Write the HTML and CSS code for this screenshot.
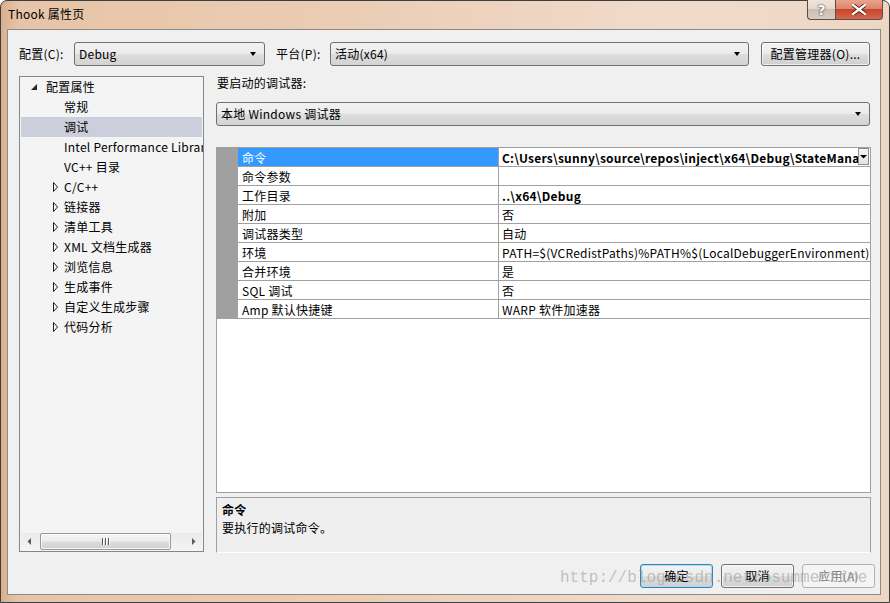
FILE: index.html
```html
<!DOCTYPE html>
<html lang="zh-CN">
<head>
<meta charset="utf-8">
<title>Thook 属性页</title>
<link rel="stylesheet" href="styles.css">
</head>
<body>
<div class="window">
  <div class="titlebar">
    <span class="title">Thook 属性页</span>
    <div class="caption">
      <div class="cap help">?</div>
      <div class="cap close">
        <svg width="14" height="11" viewBox="0 0 14 11"><path d="M1 1 L13 10 M13 1 L1 10" stroke="#4a1a10" stroke-width="4" stroke-linecap="round"/><path d="M1 1 L13 10 M13 1 L1 10" stroke="#ffffff" stroke-width="2.2" stroke-linecap="round"/></svg>
      </div>
    </div>
  </div>
  <div class="client">
    <div class="config-row">
      <span class="lbl lbl-cfg">配置(C):</span>
      <div class="combo combo-cfg"><span class="combo-text">Debug</span><span class="arrow"></span></div>
      <span class="lbl lbl-plat">平台(P):</span>
      <div class="combo combo-plat"><span class="combo-text">活动(x64)</span><span class="arrow"></span></div>
      <div class="btn btn-mgr">配置管理器(O)...</div>
    </div>
    <div class="main">
      <div class="tree">
        <ul class="tree-list">
          <li class="node lvl0"><span class="exp"><svg width="17" height="20" viewBox="0 0 17 20"><polygon points="8,7 8,13 2,13" fill="#262626"/></svg></span>配置属性</li>
          <li class="node lvl1"><span class="exp"></span>常规</li>
          <li class="node lvl1 selected"><span class="exp"></span>调试</li>
          <li class="node lvl1"><span class="exp"></span>Intel Performance Libraries</li>
          <li class="node lvl1"><span class="exp"></span>VC++ 目录</li>
          <li class="node lvl1"><span class="exp"><svg width="17" height="20" viewBox="0 0 17 20"><polygon points="6.5,5.5 10.5,10 6.5,14.5" fill="#fff" stroke="#1e1e1e" stroke-width="1"/></svg></span>C/C++</li>
          <li class="node lvl1"><span class="exp"><svg width="17" height="20" viewBox="0 0 17 20"><polygon points="6.5,5.5 10.5,10 6.5,14.5" fill="#fff" stroke="#1e1e1e" stroke-width="1"/></svg></span>链接器</li>
          <li class="node lvl1"><span class="exp"><svg width="17" height="20" viewBox="0 0 17 20"><polygon points="6.5,5.5 10.5,10 6.5,14.5" fill="#fff" stroke="#1e1e1e" stroke-width="1"/></svg></span>清单工具</li>
          <li class="node lvl1"><span class="exp"><svg width="17" height="20" viewBox="0 0 17 20"><polygon points="6.5,5.5 10.5,10 6.5,14.5" fill="#fff" stroke="#1e1e1e" stroke-width="1"/></svg></span>XML 文档生成器</li>
          <li class="node lvl1"><span class="exp"><svg width="17" height="20" viewBox="0 0 17 20"><polygon points="6.5,5.5 10.5,10 6.5,14.5" fill="#fff" stroke="#1e1e1e" stroke-width="1"/></svg></span>浏览信息</li>
          <li class="node lvl1"><span class="exp"><svg width="17" height="20" viewBox="0 0 17 20"><polygon points="6.5,5.5 10.5,10 6.5,14.5" fill="#fff" stroke="#1e1e1e" stroke-width="1"/></svg></span>生成事件</li>
          <li class="node lvl1"><span class="exp"><svg width="17" height="20" viewBox="0 0 17 20"><polygon points="6.5,5.5 10.5,10 6.5,14.5" fill="#fff" stroke="#1e1e1e" stroke-width="1"/></svg></span>自定义生成步骤</li>
          <li class="node lvl1"><span class="exp"><svg width="17" height="20" viewBox="0 0 17 20"><polygon points="6.5,5.5 10.5,10 6.5,14.5" fill="#fff" stroke="#1e1e1e" stroke-width="1"/></svg></span>代码分析</li>
        </ul>
        <div class="hscroll">
          <div class="sb-arrow"><svg width="17" height="17" viewBox="0 0 17 17"><polygon points="10,5 10,12 6.5,8.5" fill="#5a5a5a"/></svg></div>
          <div class="sb-track">
            <div class="sb-thumb"><span class="grip"></span><span class="grip"></span><span class="grip"></span></div>
          </div>
          <div class="sb-arrow"><svg width="17" height="17" viewBox="0 0 17 17"><polygon points="7,5 7,12 10.5,8.5" fill="#5a5a5a"/></svg></div>
        </div>
      </div>
      <div class="right">
        <div class="lbl-debugger">要启动的调试器:</div>
        <div class="combo combo-wide"><span class="combo-text">本地 Windows 调试器</span><span class="arrow"></span></div>
        <div class="grid">
          <div class="row sel">
            <div class="gutter"></div>
            <div class="name">命令</div>
            <div class="value bold"><span class="vtext">C:\Users\sunny\source\repos\inject\x64\Debug\StateManager.exe</span><span class="vdrop"><svg width="9" height="15" viewBox="0 0 9 15"><polygon points="1,6 8,6 4.5,9.5" fill="#000"/></svg></span></div>
          </div>
          <div class="row"><div class="gutter"></div><div class="name">命令参数</div><div class="value"></div></div>
          <div class="row"><div class="gutter"></div><div class="name">工作目录</div><div class="value bold">..\x64\Debug</div></div>
          <div class="row"><div class="gutter"></div><div class="name">附加</div><div class="value">否</div></div>
          <div class="row"><div class="gutter"></div><div class="name">调试器类型</div><div class="value">自动</div></div>
          <div class="row"><div class="gutter"></div><div class="name">环境</div><div class="value">PATH=$(VCRedistPaths)%PATH%$(LocalDebuggerEnvironment)</div></div>
          <div class="row"><div class="gutter"></div><div class="name">合并环境</div><div class="value">是</div></div>
          <div class="row"><div class="gutter"></div><div class="name">SQL 调试</div><div class="value">否</div></div>
          <div class="row"><div class="gutter"></div><div class="name">Amp 默认快捷键</div><div class="value">WARP 软件加速器</div></div>
        </div>
        <div class="desc">
          <div class="desc-title">命令</div>
          <div class="desc-text">要执行的调试命令。</div>
        </div>
      </div>
    </div>
    <div class="buttons">
      <div class="btn btn-ok">确定</div>
      <div class="btn btn-cancel">取消</div>
      <div class="btn btn-apply disabled">应用(A)</div>
    </div>
  </div>
</div>
<div class="watermark">http://blog.csdn.net/osummertime</div>
</body>
</html>
```
FILE: styles.css
```css
* { box-sizing: border-box; margin: 0; padding: 0; }
html, body { width: 890px; height: 603px; overflow: hidden; }
body {
  font-family: "Noto Sans CJK SC", "Noto Sans", sans-serif;
  font-size: 12px;
  letter-spacing: 0.25px;
  color: #000;
  background: #fff;
  position: relative;
}
.window {
  width: 890px;
  height: 603px;
  display: flex;
  flex-direction: column;
  border: 1px solid #3e3e3e;
  border-radius: 7px 7px 0 0;
  background: linear-gradient(to right, #d9b08e 0%, #e7c4a7 2%, #ebcdb5 40%, #f0dbcb 75%, #eed6c4 100%);
}
.titlebar {
  height: 28px;
  display: flex;
  align-items: flex-start;
  flex-shrink: 0;
}
.title {
  margin-left: 7px;
  margin-top: 5px;
  line-height: 16px;
  font-size: 12px;
  color: #000;
}
.caption {
  margin-left: auto;
  margin-right: 6px;
  margin-top: -1px;
  display: flex;
}
.cap {
  height: 20px;
  border: 1px solid #56504c;
  border-top: none;
  display: flex;
  align-items: center;
  justify-content: center;
}
.help {
  width: 28px;
  border-radius: 0 0 0 4px;
  border-right: none;
  background: linear-gradient(#f0e4da 0%, #e6d8cc 45%, #cdbdb0 50%, #d8cbc0 100%);
  color: #fff;
  font-family: "DejaVu Sans", sans-serif;
  font-weight: bold;
  font-size: 14px;
  letter-spacing: 0;
  text-shadow: 0 0 2px #3a3a3a, 0 0 1px #3a3a3a;
  line-height: 18px;
}
.close {
  width: 48px;
  border-radius: 0 0 4px 0;
  background: linear-gradient(#e9a48f 0%, #dc8569 45%, #c8452b 50%, #d4674a 100%);
}
.client {
  margin-left: 6px;
  width: 874px;
  height: 566px;
  border: 1px solid #8a8a8a;
  background: #f0f0f0;
  padding: 12px 9px 0 11px;
  display: flex;
  flex-direction: column;
}
.config-row {
  display: flex;
  align-items: center;
  height: 24px;
}
.lbl { line-height: 16px; }
.lbl-cfg { width: 55px; }
.lbl-plat { width: 54px; margin-left: 11px; }
.combo {
  height: 24px;
  border: 1px solid #707070;
  border-radius: 3px;
  background: linear-gradient(#f2f2f2 0%, #ebebeb 48%, #dddddd 52%, #d3d3d3 100%);
  display: flex;
  align-items: center;
  padding-left: 4px;
  padding-right: 8px;
}
.combo-text { flex: 1; line-height: 16px; white-space: nowrap; }
.arrow {
  width: 0; height: 0;
  border-left: 3.5px solid transparent;
  border-right: 3.5px solid transparent;
  border-top: 4px solid #000;
}
.combo-cfg { width: 191px; }
.combo-plat { width: 419px; }
.combo-wide { width: 654px; margin-top: 12px; }
.btn {
  height: 24px;
  border: 1px solid #707070;
  border-radius: 3px;
  background: linear-gradient(#f2f2f2 0%, #ebebeb 48%, #dddddd 52%, #cfcfcf 100%);
  box-shadow: inset 0 0 0 1px rgba(255,255,255,0.7);
  display: flex;
  align-items: center;
  justify-content: center;
  line-height: 16px;
  white-space: nowrap;
}
.btn-mgr { width: 109px; margin-left: 12px; }
.main {
  margin-top: 10px;
  display: flex;
  gap: 12px;
  height: 477px;
}
.tree {
  width: 185px;
  height: 476px;
  border: 1px solid #828790;
  background: #f4f4f4;
  display: flex;
  flex-direction: column;
  padding: 0 0 1px 1px;
}
.tree-list {
  list-style: none;
  flex: 1;
  overflow: hidden;
}
.node {
  height: 20px;
  line-height: 20px;
  white-space: nowrap;
  display: flex;
  align-items: center;
}
.lvl0 { padding-left: 8px; }
.lvl1 { padding-left: 26px; }
.exp { width: 17px; height: 20px; flex-shrink: 0; display: block; }
.exp svg { display: block; }
.selected { background: #cccedb; margin-right: 1px; }
.hscroll {
  height: 17px;
  display: flex;
  background: linear-gradient(#eaeaea, #f4f4f4);
  margin-right: 1px;
}
.sb-arrow { width: 17px; height: 17px; flex-shrink: 0; }
.sb-arrow svg { display: block; }
.sb-track { flex: 1; padding: 0 12px 0 2px; display: flex; }
.sb-thumb {
  width: 131px;
  height: 17px;
  border: 1px solid #979797;
  border-radius: 2px;
  background: linear-gradient(#f6f6f6 0%, #ececec 45%, #dcdcdc 55%, #d0d0d0 100%);
  box-shadow: inset 0 0 0 1px rgba(255,255,255,0.8);
  display: flex;
  align-items: center;
  justify-content: center;
  gap: 2px;
}
.grip { width: 1px; height: 7px; background: #555; box-shadow: 1px 0 0 #fff; }
.right {
  width: 655px;
  display: flex;
  flex-direction: column;
}
.lbl-debugger { line-height: 14px; height: 14px; margin-left: 1px; }
.grid {
  margin-top: 21px;
  height: 346px;
  border: 1px solid #a0a0a0;
  background: #fff;
}
.row {
  display: flex;
  height: 19px;
}
.gutter { width: 21px; background: #a0a0a0; flex-shrink: 0; }
.name {
  width: 261px;
  height: 19px;
  flex-shrink: 0;
  border-right: 1px solid #a0a0a0;
  border-bottom: 1px solid #a0a0a0;
  padding-left: 4px;
  padding-top: 1px;
  line-height: 18px;
  white-space: nowrap;
}
.sel .name { background: #3399ff; color: #fff; }
.value {
  flex: 1;
  min-width: 0;
  height: 19px;
  border-bottom: 1px solid #a0a0a0;
  padding-left: 3px;
  padding-top: 1px;
  line-height: 18px;
  white-space: nowrap;
  overflow: hidden;
  display: flex;
}
.bold { font-weight: bold; }
.vtext { flex: 1; overflow: hidden; white-space: nowrap; }
.vdrop {
  width: 11px;
  height: 17px;
  margin-top: -1px;
  border: 1px solid #8c8c8c;
  background: linear-gradient(#f7f7f7, #e2e2e2);
  margin-right: 1px;
  flex-shrink: 0;
}
.vdrop svg { display: block; }
.desc {
  margin-top: 4px;
  height: 56px;
  border: 1px solid #a0a0a0;
  border-bottom-color: #fff;
  background: #efefef;
  padding: 3px 5px;
}
.desc-title { font-weight: bold; line-height: 18px; }
.desc-text { line-height: 18px; }
.buttons {
  margin-top: 11px;
  margin-right: -4px;
  display: flex;
  justify-content: flex-end;
  gap: 8px;
}
.btn-ok {
  width: 73px;
  border-color: #3c7fb1;
  box-shadow: inset 0 0 0 1px #a8def8;
}
.btn-cancel { width: 73px; }
.btn-apply { width: 73px; }
.disabled {
  border-color: #adb2b5;
  background: #f4f4f4;
  color: #838383;
  box-shadow: none;
}
.watermark {
  position: absolute;
  left: 560px;
  top: 568px;
  font-family: "Liberation Mono", monospace;
  font-size: 16px;
  letter-spacing: 0;
  line-height: 20px;
  color: rgba(150,150,150,0.55);
  white-space: nowrap;
  pointer-events: none;
}
```
